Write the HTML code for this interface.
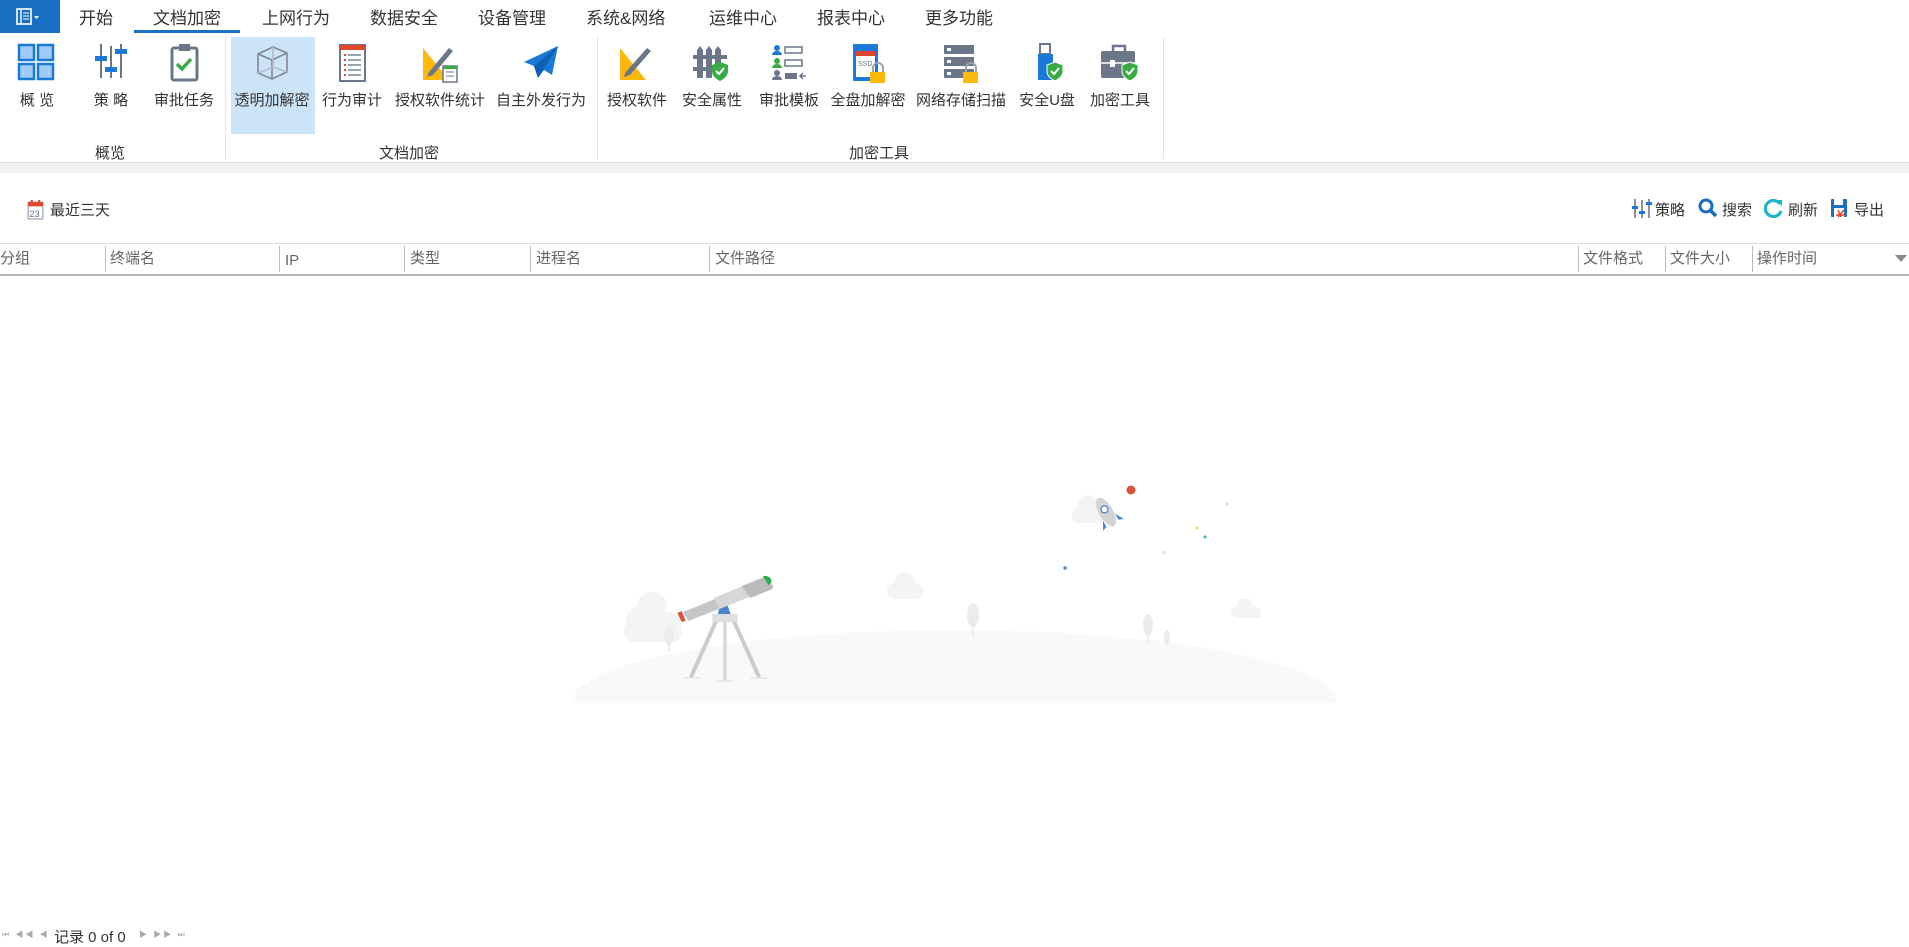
<!DOCTYPE html>
<html><head><meta charset="utf-8"><style>
*{margin:0;padding:0;box-sizing:border-box}
body{width:1909px;height:946px;background:#fff;font-family:"Liberation Sans","Noto Sans CJK SC",sans-serif;color:#333;position:relative;overflow:hidden}
.a{position:absolute;white-space:nowrap}
.tab{position:absolute;top:4px;font-size:17px;color:#333}
.lbl{position:absolute;top:89px;font-size:15px;color:#333;text-align:center;transform:translateX(-50%)}
.ic{position:absolute;top:42px;width:42px;height:42px;transform:translateX(-50%)}
.glbl{position:absolute;top:142px;font-size:15px;color:#333;transform:translateX(-50%)}
.sep{position:absolute;top:37px;width:1px;height:122px;background:#e2e2e2}
.th{position:absolute;top:249px;font-size:15px;color:#666;line-height:20px}
.cd{position:absolute;top:246px;width:1px;height:26px;background:#bbb}
.tb{position:absolute;top:199px;font-size:15px;color:#333}
</style></head><body>
<div class="a" style="left:0;top:0;width:60px;height:33px;background:#1a6fc2"></div>
<svg class="a" style="left:16px;top:8px" width="26" height="18" viewBox="0 0 26 18"><rect x="1" y="1" width="14" height="15" fill="none" stroke="#fff" stroke-width="1.6"/><line x1="5" y1="1" x2="5" y2="16" stroke="#fff" stroke-width="1.4"/><line x1="7" y1="5" x2="13" y2="5" stroke="#fff"/><line x1="7" y1="8" x2="13" y2="8" stroke="#fff"/><line x1="7" y1="11" x2="13" y2="11" stroke="#fff"/><path d="M18 8l2.5 3 2.5-3z" fill="#fff"/></svg>
<div class="tab" style="left:79px">开始</div>
<div class="tab" style="left:153px">文档加密</div>
<div class="a" style="left:134px;top:30px;width:106px;height:3px;background:#1a6fc2"></div>
<div class="tab" style="left:262px">上网行为</div>
<div class="tab" style="left:370px">数据安全</div>
<div class="tab" style="left:478px">设备管理</div>
<div class="tab" style="left:586px">系统&amp;网络</div>
<div class="tab" style="left:709px">运维中心</div>
<div class="tab" style="left:817px">报表中心</div>
<div class="tab" style="left:925px">更多功能</div>

<div class="a" style="left:231px;top:37px;width:84px;height:97px;background:#cce4f7"></div>
<div class="sep" style="left:225px"></div>
<div class="sep" style="left:597px"></div>
<div class="sep" style="left:1163px"></div>
<div class="a" style="left:0;top:162px;width:1909px;height:1px;background:#dcdcdc"></div>
<div class="a" style="left:0;top:163px;width:1909px;height:10px;background:#f2f2f2"></div>

<svg class="ic" style="left:37px" viewBox="0 0 42 42"><g fill="#9ecbf7" stroke="#1a78d6" stroke-width="2.5"><rect x="3" y="3" width="15" height="15"/><rect x="22" y="3" width="15" height="15"/><rect x="3" y="22" width="15" height="15"/><rect x="22" y="22" width="15" height="15"/></g></svg>
<svg class="ic" style="left:111px" viewBox="0 0 42 42"><g stroke="#6b7788" stroke-width="2"><line x1="11" y1="2" x2="11" y2="36"/><line x1="21" y1="4" x2="21" y2="36"/><line x1="31" y1="2" x2="31" y2="36"/></g><g fill="#1a78d6"><rect x="5" y="14" width="12" height="5"/><rect x="15" y="25" width="12" height="5"/><rect x="25" y="7" width="12" height="5"/></g></svg>
<svg class="ic" style="left:184px" viewBox="0 0 42 42"><rect x="9" y="6" width="25" height="32" rx="2" fill="#fff" stroke="#6b7788" stroke-width="3"/><rect x="16" y="2" width="11" height="7" fill="#6b7788"/><path d="M14 22l5 5 9-10" fill="none" stroke="#3aaa45" stroke-width="3.5"/></svg>
<svg class="ic" style="left:272px" viewBox="0 0 42 42"><g fill="none" stroke="#7f8895" stroke-width="1.6"><path d="M7 12L22 5 36 11 36 30 21 37 7 31z"/><path d="M7 12L21 18 36 11M21 18V37"/><path d="M7 31L22 25 36 30M22 5V25" stroke="#b5bcc5"/></g></svg>
<svg class="ic" style="left:352px" viewBox="0 0 42 42"><rect x="9" y="3" width="25" height="36" fill="#fff" stroke="#6b7788" stroke-width="2"/><rect x="9" y="3" width="25" height="5" fill="#e0462b"/><g stroke="#e0462b" stroke-width="2"><line x1="13" y1="13" x2="15" y2="13"/><line x1="13" y1="18" x2="15" y2="18"/><line x1="13" y1="23" x2="15" y2="23"/><line x1="13" y1="28" x2="15" y2="28"/><line x1="13" y1="33" x2="15" y2="33"/></g><g stroke="#9aa3ae" stroke-width="2"><line x1="17" y1="13" x2="30" y2="13"/><line x1="17" y1="18" x2="30" y2="18"/><line x1="17" y1="23" x2="30" y2="23"/><line x1="17" y1="28" x2="30" y2="28"/><line x1="17" y1="33" x2="30" y2="33"/></g></svg>
<svg class="ic" style="left:440px" viewBox="0 0 42 42"><path d="M4 6L30 38H4z" fill="#fcb80b"/><path d="M10 30L30 6l4 3-20 24-6 2z" fill="#6b7788"/><rect x="24" y="24" width="14" height="16" fill="#fff" stroke="#6b7788" stroke-width="1.5"/><rect x="24" y="24" width="14" height="3" fill="#3aaa45"/><g stroke="#6b7788"><line x1="27" y1="30" x2="35" y2="30"/><line x1="27" y1="34" x2="35" y2="34"/></g></svg>
<svg class="ic" style="left:541px" viewBox="0 0 42 42"><path d="M38 4L4 20l10 4 4 12 6-8 8 5z" fill="#1a78d6"/><path d="M14 24L38 4 18 36z" fill="#0f5fb3"/></svg>
<svg class="ic" style="left:637px" viewBox="0 0 42 42"><path d="M4 6L30 38H4z" fill="#fcb80b"/><path d="M9 31L31 6l4 3-21 24-6 2z" fill="#6b7788"/></svg>
<svg class="ic" style="left:712px" viewBox="0 0 42 42"><g fill="#6b7788"><path d="M6 8l3-4 3 4v28H6z"/><path d="M15 8l3-4 3 4v28h-6z"/><path d="M24 8l3-4 3 4v20h-6z"/><rect x="2" y="13" width="34" height="4"/><rect x="2" y="25" width="20" height="4"/></g><path d="M29 20l8 3v6c0 5-4 8-8 10-4-2-8-5-8-10v-6z" fill="#3aaa45"/><path d="M25 29l3 3 5-6" fill="none" stroke="#fff" stroke-width="2"/></svg>
<svg class="ic" style="left:789px" viewBox="0 0 42 42"><g fill="#1a78d6"><circle cx="9" cy="6" r="3"/><path d="M4 13a5 4 0 0 1 10 0z"/></g><g fill="#3aaa45"><circle cx="9" cy="19" r="3"/><path d="M4 26a5 4 0 0 1 10 0z"/></g><g fill="#6b7788"><circle cx="9" cy="31" r="3"/><path d="M4 38a5 4 0 0 1 10 0z"/></g><g fill="none" stroke="#6b7788" stroke-width="1.5"><rect x="17" y="5" width="17" height="6"/><rect x="17" y="18" width="17" height="6"/></g><rect x="17" y="31" width="12" height="6" fill="#6b7788"/><path d="M38 34h-6m3-3l-3 3 3 3" stroke="#6b7788" fill="none" stroke-width="1.5"/></svg>
<svg class="ic" style="left:868px" viewBox="0 0 42 42"><rect x="6" y="2" width="25" height="37" rx="1" fill="#1a78d6"/><rect x="9" y="9" width="19" height="26" fill="#fff"/><rect x="9" y="9" width="19" height="5" fill="#e0462b"/><text x="11" y="24" font-size="7" font-family="Liberation Sans" fill="#6b7788">SSD</text><path d="M26 30v-4a5 5 0 0 1 10 0v4" fill="none" stroke="#9aa3ae" stroke-width="2"/><rect x="23" y="30" width="15" height="11" fill="#fcb80b"/></svg>
<svg class="ic" style="left:961px" viewBox="0 0 42 42"><g fill="#6b7788"><rect x="4" y="3" width="30" height="9"/><rect x="4" y="15" width="30" height="9"/><rect x="4" y="27" width="30" height="9"/></g><g fill="#fff"><rect x="7" y="6" width="4" height="3"/><rect x="7" y="18" width="4" height="3"/><rect x="7" y="30" width="4" height="3"/></g><path d="M26 30v-4a5 5 0 0 1 10 0v4" fill="none" stroke="#9aa3ae" stroke-width="2"/><rect x="23" y="30" width="15" height="11" fill="#fcb80b"/></svg>
<svg class="ic" style="left:1047px" viewBox="0 0 42 42"><rect x="14" y="2" width="10" height="10" fill="none" stroke="#6b7788" stroke-width="2"/><rect x="12" y="12" width="15" height="26" fill="#1a78d6"/><path d="M29 20l8 3v6c0 5-4 8-8 10-4-2-8-5-8-10v-6z" fill="#3aaa45" stroke="#fff"/><path d="M25 29l3 3 5-6" fill="none" stroke="#fff" stroke-width="2"/></svg>
<svg class="ic" style="left:1120px" viewBox="0 0 42 42"><path d="M14 9V4h12v5" fill="none" stroke="#6b7788" stroke-width="2.5"/><rect x="2" y="9" width="34" height="27" rx="2" fill="#6b7788"/><line x1="2" y1="21" x2="36" y2="21" stroke="#fff" stroke-width="1.5"/><rect x="11" y="18" width="5" height="7" fill="#fff"/><path d="M31 20l8 3v6c0 5-4 8-8 10-4-2-8-5-8-10v-6z" fill="#3aaa45" stroke="#fff"/><path d="M27 29l3 3 5-6" fill="none" stroke="#fff" stroke-width="2"/></svg>

<div class="lbl" style="left:37px">概 览</div>
<div class="lbl" style="left:111px">策 略</div>
<div class="lbl" style="left:184px">审批任务</div>
<div class="lbl" style="left:272px">透明加解密</div>
<div class="lbl" style="left:352px">行为审计</div>
<div class="lbl" style="left:440px">授权软件统计</div>
<div class="lbl" style="left:541px">自主外发行为</div>
<div class="lbl" style="left:637px">授权软件</div>
<div class="lbl" style="left:712px">安全属性</div>
<div class="lbl" style="left:789px">审批模板</div>
<div class="lbl" style="left:868px">全盘加解密</div>
<div class="lbl" style="left:961px">网络存储扫描</div>
<div class="lbl" style="left:1047px">安全U盘</div>
<div class="lbl" style="left:1120px">加密工具</div>
<div class="glbl" style="left:110px">概览</div>
<div class="glbl" style="left:409px">文档加密</div>
<div class="glbl" style="left:879px">加密工具</div>

<svg class="a" style="left:26px;top:199px" width="19" height="21" viewBox="0 0 15 20"><rect x="0.5" y="3" width="14" height="16" fill="#fff" stroke="#8a96a6"/><rect x="0.5" y="3" width="14" height="4" fill="#e0462b"/><rect x="3" y="1" width="2" height="4" fill="#e0462b"/><rect x="10" y="1" width="2" height="4" fill="#e0462b"/><text x="1.5" y="17" font-size="9" font-family="Liberation Sans" fill="#6b7788">23</text></svg>
<div class="tb" style="left:50px">最近三天</div>
<svg class="a" style="left:1632px;top:198px" width="20" height="21" viewBox="0 0 20 21"><g stroke="#6b7788" stroke-width="1.6"><line x1="3" y1="1" x2="3" y2="20"/><line x1="10" y1="2" x2="10" y2="20"/><line x1="17" y1="1" x2="17" y2="20"/></g><g fill="#1a78d6"><rect x="0" y="8" width="6" height="3"/><rect x="7" y="13" width="6" height="3"/><rect x="14" y="4" width="6" height="3"/></g></svg>
<div class="tb" style="left:1655px">策略</div>
<svg class="a" style="left:1698px;top:198px" width="20" height="20" viewBox="0 0 20 20"><circle cx="8" cy="8" r="6" fill="none" stroke="#1a6fc2" stroke-width="3"/><line x1="12" y1="12" x2="18" y2="18" stroke="#1a6fc2" stroke-width="3.5"/></svg>
<div class="tb" style="left:1722px">搜索</div>
<svg class="a" style="left:1764px;top:198px" width="20" height="20" viewBox="0 0 20 20"><path d="M16 6A8 8 0 1 0 17 13" fill="none" stroke="#1bb5c5" stroke-width="3.2"/><path d="M12 2l6 0 0 6z" fill="#1bb5c5"/></svg>
<div class="tb" style="left:1788px">刷新</div>
<svg class="a" style="left:1830px;top:198px" width="20" height="20" viewBox="0 0 20 20"><rect x="1" y="1" width="16" height="18" rx="1" fill="#1a6fc2"/><rect x="4" y="1" width="9" height="6" fill="#fff"/><rect x="4" y="10" width="10" height="9" fill="#fff"/><path d="M8 12l3 7M14 12l-6 7M6 17h9" stroke="#e0462b" stroke-width="1.5" fill="none"/></svg>
<div class="tb" style="left:1854px">导出</div>

<div class="a" style="left:0;top:243px;width:1909px;height:1px;background:#ddd"></div>
<div class="a" style="left:0;top:274px;width:1909px;height:2px;background:#b8b8b8"></div>
<div class="th" style="left:0">分组</div>
<div class="cd" style="left:105px"></div><div class="th" style="left:110px">终端名</div>
<div class="cd" style="left:279px"></div><div class="th" style="left:285px;top:251px">IP</div>
<div class="cd" style="left:404px"></div><div class="th" style="left:410px">类型</div>
<div class="cd" style="left:530px"></div><div class="th" style="left:536px">进程名</div>
<div class="cd" style="left:709px"></div><div class="th" style="left:715px">文件路径</div>
<div class="cd" style="left:1578px"></div><div class="th" style="left:1583px">文件格式</div>
<div class="cd" style="left:1665px"></div><div class="th" style="left:1670px">文件大小</div>
<div class="cd" style="left:1752px"></div><div class="th" style="left:1757px">操作时间</div>
<svg class="a" style="left:1895px;top:255px" width="12" height="8"><path d="M0 0h12L6 7z" fill="#888"/></svg>

<svg class="a" style="left:540px;top:470px" width="840" height="240" viewBox="540 470 840 240">
<ellipse cx="954" cy="702" rx="382" ry="72" fill="#f9f9f9"/>
<rect x="540" y="703" width="840" height="20" fill="#fff"/>
<g fill="#f4f4f4"><circle cx="640" cy="620" r="14"/><circle cx="652" cy="607" r="15"/><circle cx="668" cy="624" r="12"/><rect x="624" y="620" width="58" height="22" rx="10"/>
<circle cx="905" cy="582" r="10"/><circle cx="895" cy="591" r="8"/><circle cx="915" cy="591" r="8"/><rect x="889" y="587" width="34" height="12" rx="6"/>
<circle cx="1245" cy="606" r="8"/><circle cx="1237" cy="612" r="6"/><circle cx="1253" cy="612" r="6"/><rect x="1232" y="608" width="30" height="10" rx="5"/>
<circle cx="1088" cy="505" r="10"/><circle cx="1080" cy="515" r="8"/><rect x="1072" y="510" width="32" height="13" rx="6"/></g>
<g fill="#ececec"><ellipse cx="669" cy="635" rx="5" ry="10"/><ellipse cx="973" cy="615" rx="6" ry="12"/><ellipse cx="1148" cy="625" rx="5" ry="11"/><ellipse cx="1167" cy="637" rx="3" ry="7"/></g>
<g stroke="#e6e6e6" stroke-width="1.2"><line x1="669" y1="640" x2="669" y2="652"/><line x1="973" y1="620" x2="973" y2="637"/><line x1="1148" y1="630" x2="1148" y2="644"/><line x1="1167" y1="640" x2="1167" y2="646"/></g>
<g transform="translate(725 0) scale(1.4 1) translate(-668 0)">
<g stroke="#c9cbcd" stroke-width="3" stroke-linecap="round"><line x1="662" y1="620" x2="644" y2="676"/><line x1="674" y1="620" x2="692" y2="676"/></g>
<line x1="668" y1="620" x2="668" y2="680" stroke="#d6d8da" stroke-width="2.5"/>
<rect x="659" y="614" width="18" height="8" fill="#dfe0e2"/>
<path d="M664 606l6 0 2 8-9 0z" fill="#4a86c8"/>
<g stroke="#e6e6e6" stroke-width="1.5"><line x1="638" y1="678" x2="650" y2="678"/><line x1="662" y1="681" x2="674" y2="681"/><line x1="686" y1="678" x2="698" y2="678"/></g>
<path d="M638 612l60-34 5 9-61 34z" fill="#c4c6c8"/>
<path d="M660 598l24-14 5 11-25 14z" fill="#d5d7d9"/>
<path d="M680 586l16-9 6 12-16 9z" fill="#b9bbbd"/>
<path d="M637 611l3 10-3 1-3-9z" fill="#d9533c"/>
<path d="M695 576a5 5 0 0 1 4 9z" fill="#2eab4a"/>
</g>
<g transform="translate(1106 512) rotate(-30)"><ellipse cx="0" cy="0" rx="7" ry="16" fill="#d2d4d6"/><circle cx="0" cy="-3" r="3.5" fill="#fff" stroke="#4a86c8" stroke-width="1.3"/><path d="M-7 6l-5 9 5-2zM7 6l5 9-5-2z" fill="#4a86c8"/></g>
<circle cx="1131" cy="490" r="4.5" fill="#d9533c"/>
<circle cx="1227" cy="504" r="1.8" fill="#e3e3e3"/>
<circle cx="1197" cy="528" r="1.3" fill="#f2c94c"/>
<circle cx="1205" cy="537" r="1.5" fill="#3cc07c"/>
<circle cx="1164" cy="553" r="2.3" fill="#eaeaea"/>
<circle cx="1065" cy="568" r="1.7" fill="#4a86c8"/>
</svg>

<div class="a" style="left:2px;top:929px;font-size:8px;color:#aaa;letter-spacing:2px">⏮ ◀◀ ◀</div>
<div class="a" style="left:54px;top:926px;font-size:15px;color:#333">记录 0 of 0</div>
<div class="a" style="left:139px;top:929px;font-size:8px;color:#aaa;letter-spacing:2px">▶ ▶▶ ⏭</div>
</body></html>
